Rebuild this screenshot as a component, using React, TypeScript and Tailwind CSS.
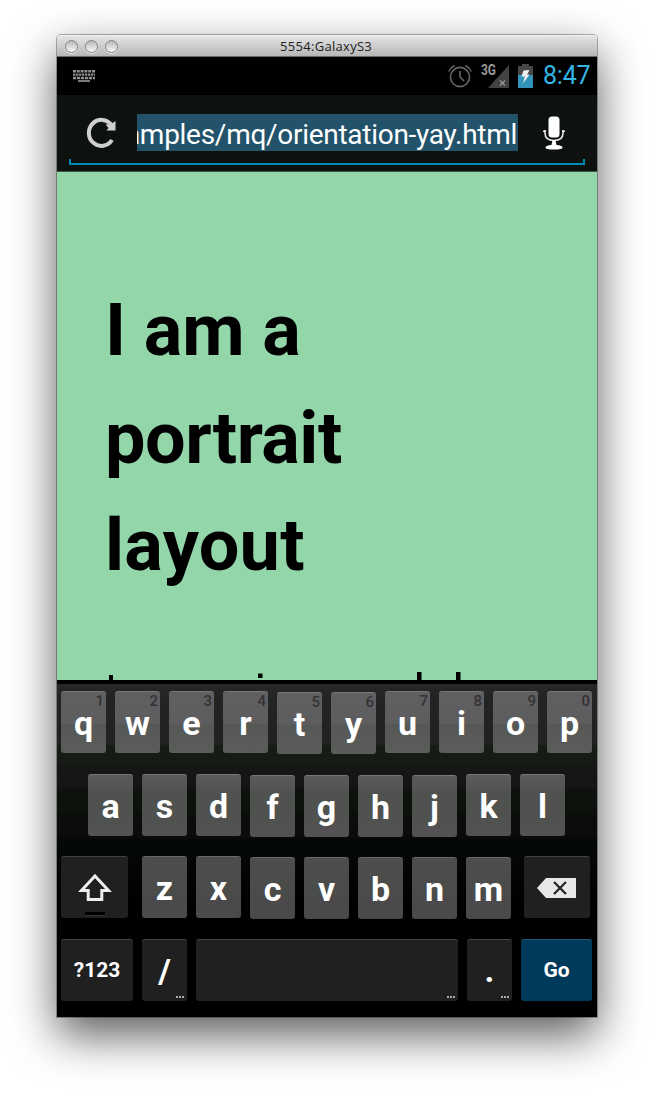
import React from "react";

const light =
  "h-[13px] w-[13px] rounded-full border border-[#858585] bg-gradient-to-b from-[#b5b5b5] via-[#dadada] to-[#f4f4f4] shadow-[0_1px_0_#eee]";

const rowTone = [
  "bg-[linear-gradient(#605f61_0,#5d5c5e_32px,#555855_32px,#5a5d5a_62px)] border-[#777]",
  "bg-[linear-gradient(#5a5a5a_0,#535353_15px,#4f524f_15px,#4f524f_51px,#535153_51px)] border-[#777]",
  "bg-[linear-gradient(#4b4e4a_0,#494c48_39px,#4b494c_39px,#4b494c_62px)] border-[#686868]",
];

function Letter({ c, hint, row, low }: { c: string; hint?: string; row: number; low?: boolean }) {
  return (
    <div
      className={`relative flex h-[62px] w-[45px] shrink-0 justify-center rounded-[3px] border-t ${rowTone[row]} ${low ? "mt-px" : ""}`}
    >
      <span className="text-[34px] font-bold leading-[62px] text-white">{c}</span>
      {hint && (
        <span className="absolute right-[2px] top-[2px] text-[15px] font-medium leading-[15px] text-[#333]">{hint}</span>
      )}
    </div>
  );
}

function Dots() {
  return (
    <div className="absolute bottom-[3px] right-[3px] flex gap-px">
      <i className="h-[2px] w-[2px] bg-[#aaa]" />
      <i className="h-[2px] w-[2px] bg-[#aaa]" />
      <i className="h-[2px] w-[2px] bg-[#aaa]" />
    </div>
  );
}

const dark = "relative flex h-[62px] shrink-0 items-center justify-center rounded-[3px] border-t border-[#444] bg-[#202020] text-white";

function KeyboardGlyph() {
  return (
    <svg width="22" height="12" viewBox="0 0 22 12" fill="none" stroke="#909090" strokeWidth="2.4">
      <path d="M0 1.2H22" strokeDasharray="3 .8" />
      <path d="M0 4.6H22" strokeDasharray="2.3 .7" />
      <path d="M0 8H22" strokeDasharray="3.2 .8" />
      <path d="M5 11H17" strokeWidth="1.7" />
    </svg>
  );
}

export default function App() {
  return (
    <div className="flex h-[1096px] w-[654px] justify-center overflow-hidden bg-white pt-[35px] font-['Roboto',sans-serif]">
      <div className="flex h-[982px] w-[540px] flex-col rounded-t-[4px] shadow-[0_0_0_1px_rgba(0,0,0,0.3),0_18px_46px_rgba(0,0,0,0.65)]">
        <div className="flex h-[22px] shrink-0 items-center rounded-t-[4px] border-b border-t border-b-[#6a6a6a] border-t-[#f2f2f2] bg-gradient-to-b from-[#e4e4e4] to-[#b7b7b7] pl-[8px]">
          <div className="flex w-[215px] gap-[7px]">
            <div className={light} />
            <div className={light} />
            <div className={light} />
          </div>
          <span className="whitespace-nowrap font-['Open_Sans',sans-serif] text-[13px] leading-[20px] tracking-[0.3px] text-[#222]">5554:GalaxyS3</span>
        </div>

        <div className="flex h-[38px] shrink-0 items-center bg-black pl-[16px] pr-[7px]">
          <KeyboardGlyph />
          <svg className="ml-auto" width="24" height="24" viewBox="0 0 24 24" fill="none" stroke="#666" strokeWidth="1.6">
            <circle cx="12" cy="13" r="9.6" />
            <path d="M12 7v6l4 4M.8 7.5Q2.5 3.5 6.5 1.5M23.2 7.5Q21.5 3.5 17.5 1.5" />
          </svg>
          <svg className="ml-[9px]" width="28" height="26" viewBox="0 0 28 26">
            <path d="M28 2V25H7Z" fill="#424242" />
            <path d="M19 17.5l5 5m0-5l-5 5" stroke="#999" strokeWidth="1.3" />
            <text x="0" y="12" fill="#999" fontFamily="Roboto" fontWeight="700" fontSize="14" textLength="15" lengthAdjust="spacingAndGlyphs">3G</text>
          </svg>
          <svg className="ml-[9px]" width="15" height="24" viewBox="0 0 15 24">
            <path d="M0 2H4V0H11V2H15V12H0Z" fill="#484848" />
            <path d="M0 11H15V24H0Z" fill="#3293bb" />
            <path d="M5.5 6.5L11.5 6L9.2 10.5H11.5L5 19.5L6.8 12.5H3.5Z" fill="#eee" />
          </svg>
          <span className="ml-[10px] w-[47px] whitespace-nowrap text-[25px] leading-[40px] tracking-[-0.2px] text-[#33b5e5]">8:47</span>
        </div>

        <div className="flex h-[77px] shrink-0 flex-col border-b border-[#3c5746] bg-[#0e120f] px-[12px] pt-[19px]">
          <div className="flex h-[37px] items-center">
            <svg className="ml-[16px]" width="32" height="32" viewBox="0 0 32 32" fill="none">
              <path d="M26.5 8A12.6 13 0 1 0 27 23" stroke="#d0cfd0" strokeWidth="4" />
              <path d="M30.5 4V13.5H21.5L23.5 11L20.5 7.5L26 7Z" fill="#d0cfd0" />
            </svg>
            <div className="ml-[20px] flex h-[37px] w-[381px] justify-end overflow-hidden bg-[#22536a] pr-[1px]">
              <span className="whitespace-nowrap text-[28px] leading-[42px] tracking-[-0.28px] text-white">amples/mq/orientation-yay.html</span>
            </div>
            <svg className="ml-[25px]" width="22" height="34" viewBox="0 0 22 34" fill="none">
              <rect x="5.5" y="0.5" width="11" height="21" rx="3.5" fill="#fff" />
              <path d="M2 14V17Q2 24.5 11 24.5Q20 24.5 20 17V14M0 15.2H3M19 15.2H22" stroke="#eee" strokeWidth="1.5" />
              <path d="M9.5 24H12.5L13.5 29Q19.5 29.5 19.5 31.5Q19.5 33.5 11 33.5Q2.5 33.5 2.5 31.5Q2.5 29.5 8.5 29Z" fill="#fff" />
            </svg>
          </div>
          <div className="mt-[8px] h-[6px] border-x-2 border-b-2 border-[#0389b8]" />
        </div>

        <div className="flex h-[508px] shrink-0 flex-col bg-[#92d6aa] pl-[48px]">
          <h1 className="flex flex-col pt-[105px] text-[72px] font-bold leading-[108px] text-black">
            <span className="tracking-[-0.1px]">I am a</span>
            <span className="tracking-[-0.5px]">portrait</span>
            <span className="-mt-px tracking-[0.3px]">layout</span>
          </h1>
          <svg className="mt-auto shrink-0" width="480" height="10" viewBox="0 0 480 10" fill="black">
            <path d="M4 5h4v5h-4zM153 3.5h4.5v4.5h-4.5zM312 2h4.5v8h-4.5zM351 2h4.5v8h-4.5z" />
          </svg>
        </div>

        <div className="flex h-[337px] shrink-0 flex-col gap-[21px] border-t-4 border-black bg-[linear-gradient(#27272a_0,#222423_15px,#202220_60px,#171c16_62px,#161a15_80px,#161616_82px,#151515_103px,#0e120e_105px,#0c110c_128px,#0c0c0c_131px,#0b0b0b_153px,#050905_155px,#040704_175px,#000_220px)] px-[4px] pt-[7px]">
          <div className="flex h-[62px] items-start gap-[9px]">
            {"qwertyuiop".split("").map((c, i) => (
              <Letter key={c} c={c} hint={String((i + 1) % 10)} row={0} low={i === 4 || i === 5} />
            ))}
          </div>
          <div className="flex h-[62px] items-start gap-[9px] pl-[27px]">
            {"asdfghjkl".split("").map((c, i) => (
              <Letter key={c} c={c} row={1} low={i > 2 && i < 7} />
            ))}
          </div>
          <div className="-mt-px flex h-[62px] items-start gap-[9px]">
            <div className={`${dark} mr-[5px] w-[67px]`}>
              <svg width="36" height="30" viewBox="0 0 36 30" fill="none" stroke="#eee" strokeWidth="3">
                <path d="M18 3L31.5 17.5H24.8V26.5H11.2V17.5H4.5Z" />
              </svg>
              <i className="absolute bottom-[2px] h-[4px] w-[20px] border-b border-[#333] bg-black" />
            </div>
            {"zxcvbnm".split("").map((c, i) => (
              <Letter key={c} c={c} row={2} low={i > 1} />
            ))}
            <div className={`${dark} ml-[4px] w-[66px]`}>
              <svg width="40" height="20" viewBox="0 0 40 20">
                <path d="M0 10L9 0H39V20H9Z" fill="#e9e7e9" />
                <path d="M17 4L29 16M29 4L17 16" stroke="#222" strokeWidth="2.2" />
              </svg>
            </div>
          </div>
          <div className="flex h-[62px] items-start">
            <div className={`${dark} w-[72px] pt-px text-[21px] font-bold`}>?123</div>
            <div className={`${dark} ml-[9px] w-[45px] pt-px text-[34px] font-bold`}>
              /<Dots />
            </div>
            <div className={`${dark} ml-[9px] w-[262px]`}>
              <Dots />
            </div>
            <div className={`${dark} ml-[9px] w-[45px] text-[34px] font-bold`}>
              .<Dots />
            </div>
            <div className="ml-[9px] flex h-[62px] w-[71px] items-center justify-center rounded-[3px] border-t border-[#24567a] bg-[#003a5b] pt-px text-[21px] font-bold text-white">
              Go
            </div>
          </div>
        </div>
      </div>
    </div>
  );
}
